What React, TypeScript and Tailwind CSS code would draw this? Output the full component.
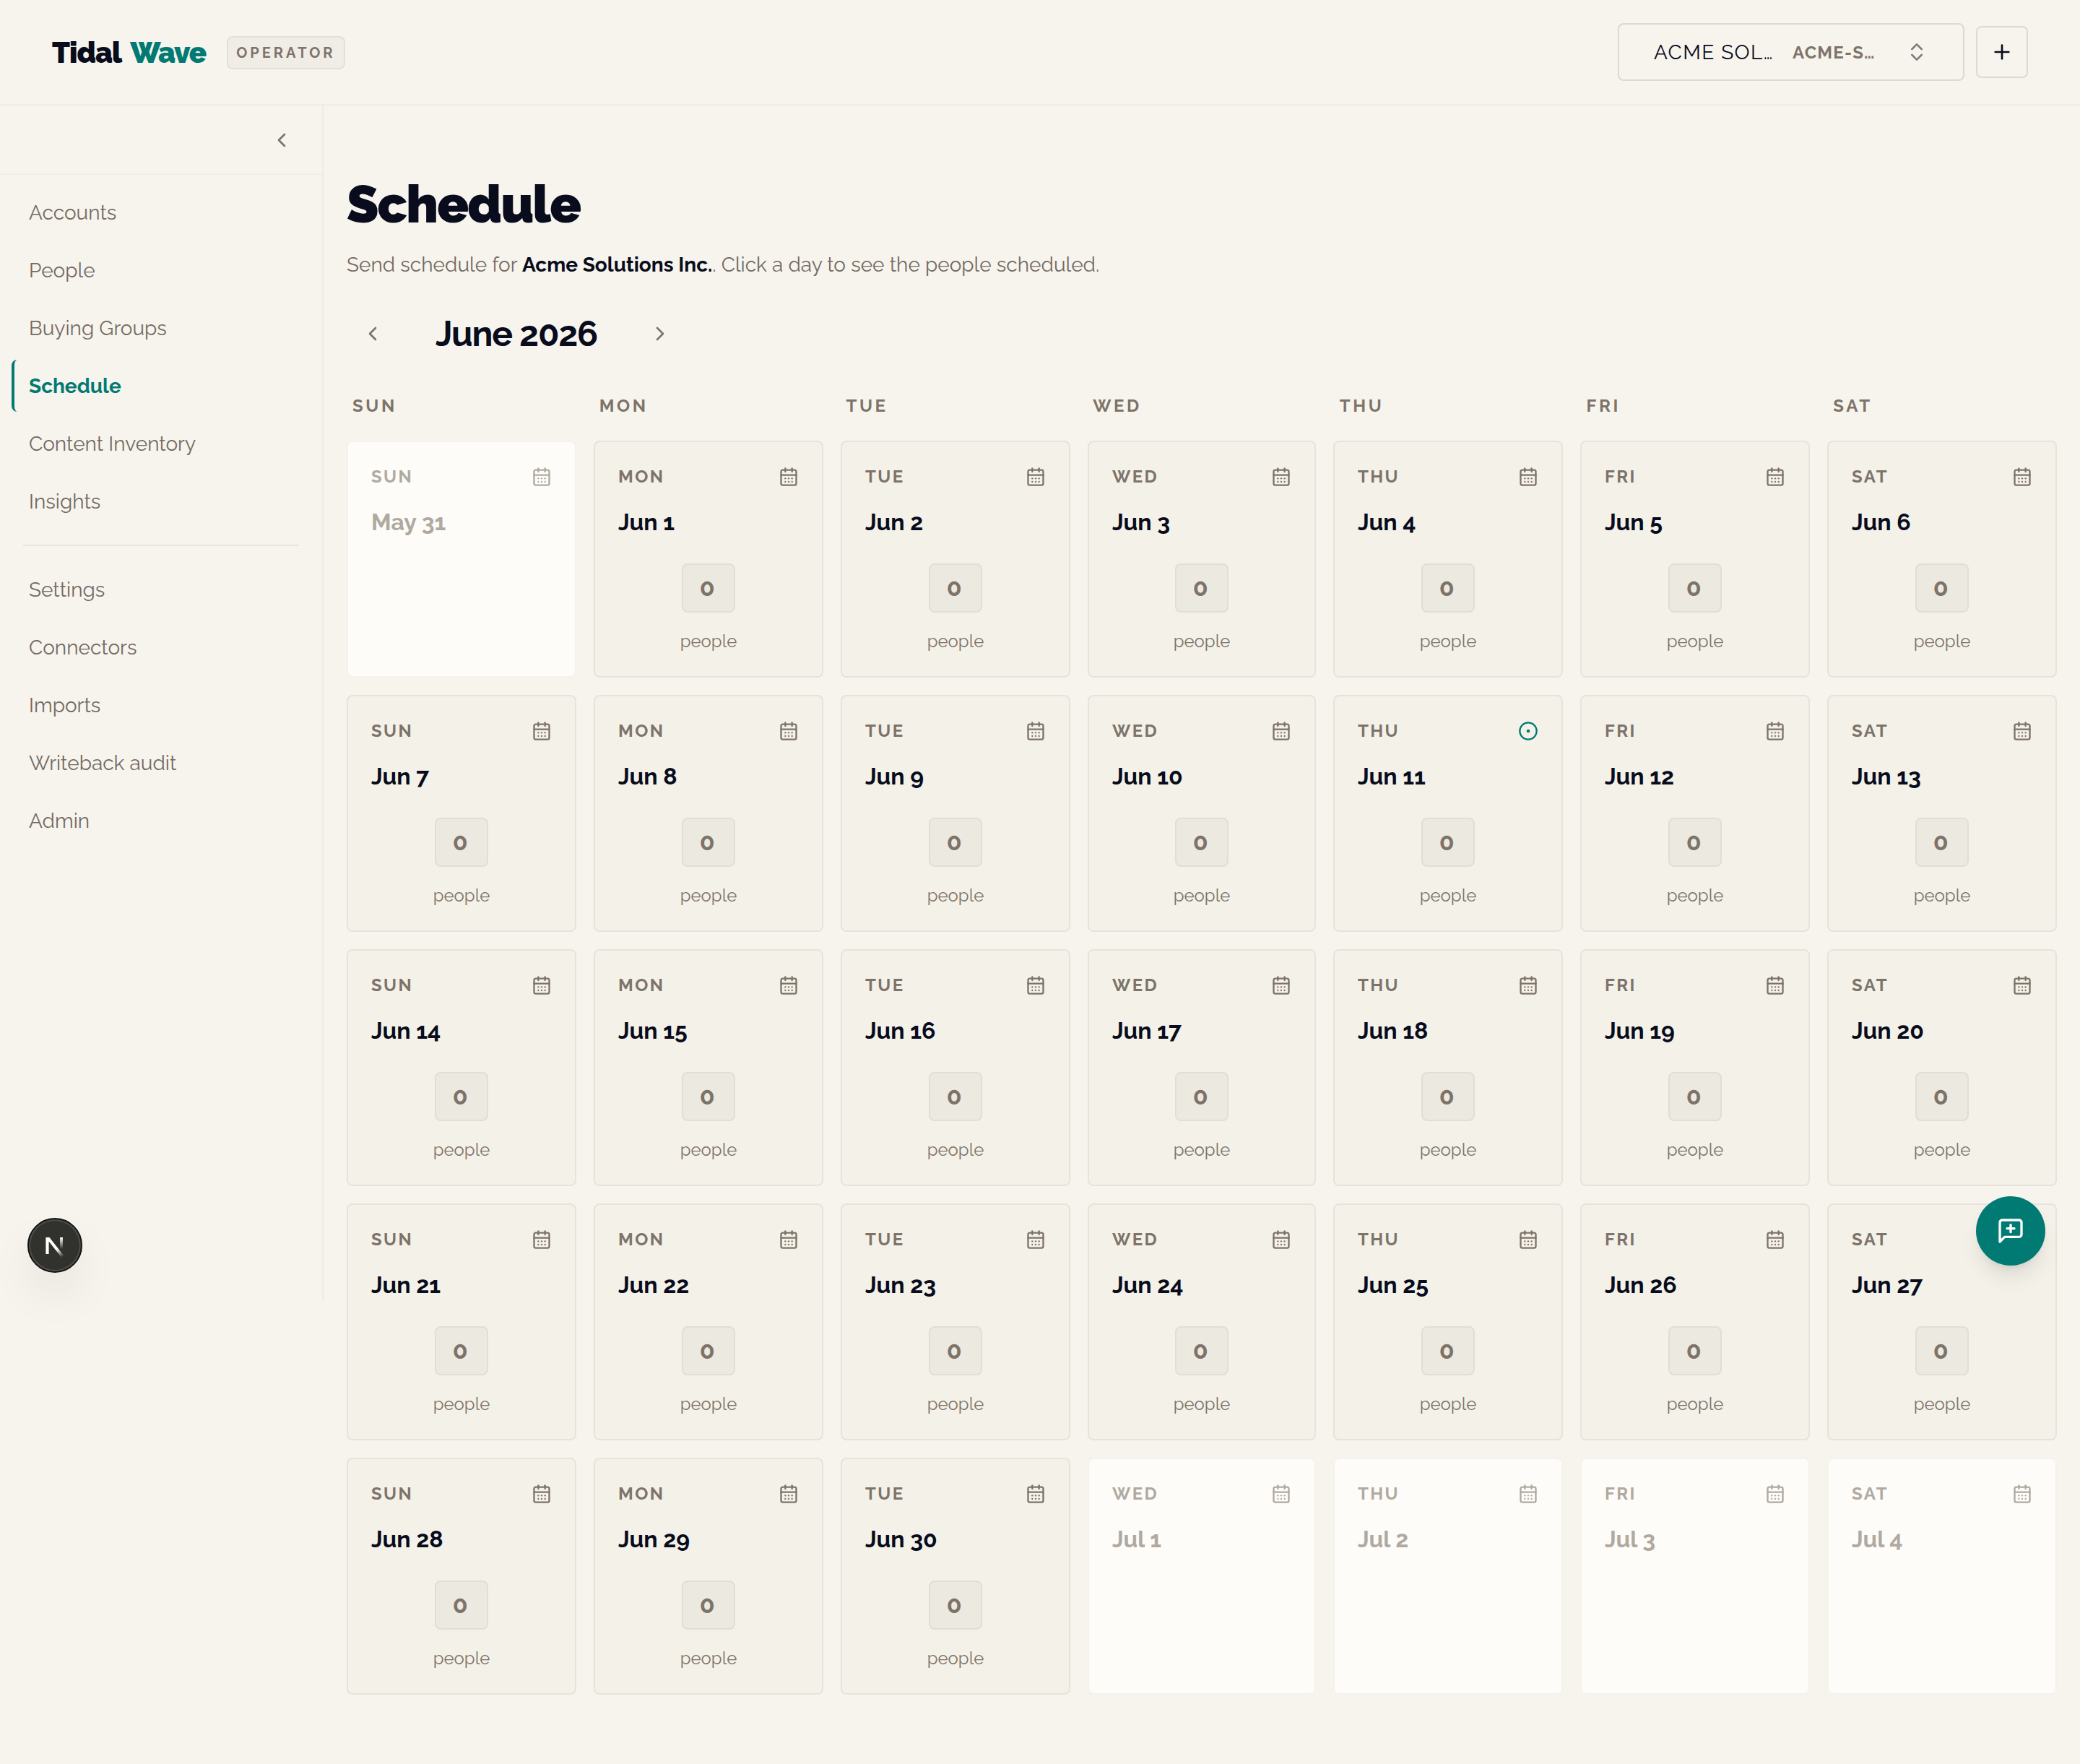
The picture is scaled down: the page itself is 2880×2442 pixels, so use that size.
import { CalendarDays, ChevronLeft, ChevronRight, ChevronsUpDown, CircleDot, Plus } from "lucide-react";
import clsx from "clsx";

const WEEKDAYS = ["Sun", "Mon", "Tue", "Wed", "Thu", "Fri", "Sat"];
const MONTHS = ["Jan", "Feb", "Mar", "Apr", "May", "Jun", "Jul", "Aug", "Sep", "Oct", "Nov", "Dec"];

const PRIMARY_NAV = ["Accounts", "People", "Buying Groups", "Schedule", "Content Inventory", "Insights"];
const SECONDARY_NAV = ["Settings", "Connectors", "Imports", "Writeback audit", "Admin"];

interface Day {
  weekday: string;
  label: string;
  inMonth: boolean;
  isToday: boolean;
  people: number;
}

function buildDays(): Day[] {
  return Array.from({ length: 35 }, (_, i) => {
    const date = new Date(2026, 4, 31 + i);
    const inMonth = date.getMonth() === 5;
    return {
      weekday: WEEKDAYS[date.getDay()],
      label: `${MONTHS[date.getMonth()]} ${date.getDate()}`,
      inMonth,
      isToday: inMonth && date.getDate() === 11,
      people: 0,
    };
  });
}

function NavItem({ label, active }: { label: string; active?: boolean }) {
  return (
    <a
      className={clsx(
        "flex h-[72px] items-center rounded-lg border-l-4 pt-px pl-5 text-[28px]",
        active ? "border-[#007a73] font-bold text-[#007a73]" : "border-transparent text-[#736a63]"
      )}
    >
      {label}
    </a>
  );
}

function Sidebar() {
  return (
    <aside className="h-[1656px] w-[448px] shrink-0 border-r-2 border-[#efece5]">
      <div className="flex h-24 items-center justify-end border-b-2 border-[#efece5] pt-0.5 pr-10">
        <ChevronLeft className="h-8 w-8 text-[#7d7369]" />
      </div>
      <nav className="flex flex-col gap-2 px-4 pt-4">
        {PRIMARY_NAV.map((label) => (
          <NavItem key={label} label={label} active={label === "Schedule"} />
        ))}
        <div className="mx-4 my-4 h-0.5 bg-[#e8e5dd]" />
        {SECONDARY_NAV.map((label) => (
          <NavItem key={label} label={label} />
        ))}
      </nav>
    </aside>
  );
}

function Header() {
  return (
    <header className="flex h-[146px] items-center justify-between border-b-2 border-[#efece5] px-[72px]">
      <div className="flex items-center gap-[29px] pt-0.5">
        <div className="flex gap-3 text-[40px] leading-[44px] font-black tracking-[-0.025em]">
          <span>Tidal</span>
          <span className="text-[#007a73]">Wave</span>
        </div>
        <span className="flex h-[46px] items-center rounded-lg border-2 border-[#e3e0d9] bg-[#f0ede6] px-[11px] text-xl font-bold tracking-[0.2em] text-[#7d7369]">
          OPERATOR
        </span>
      </div>
      <div className="flex items-center gap-4">
        <button className="flex h-20 w-[480px] items-center rounded-lg border-2 border-[#dcd9d1] pl-12">
          <span className="w-[168px] pt-0.5 text-left text-[28px] tracking-[0.05em]">ACME SOL…</span>
          <span className="ml-6 w-[118px] pt-0.5 text-left text-2xl font-bold tracking-[0.05em] text-[#7d7369]">ACME-S…</span>
          <ChevronsUpDown className="ml-auto mr-12 h-8 w-8 opacity-50" />
        </button>
        <button className="flex h-[72px] w-[72px] items-center justify-center rounded-lg border-2 border-[#dcd9d1]">
          <Plus className="h-8 w-8" />
        </button>
      </div>
    </header>
  );
}

function DayCard({ day }: { day: Day }) {
  return (
    <div
      className={clsx(
        "flex h-[328px] flex-col rounded-lg border-2 p-8",
        day.inMonth ? "border-[#e6e3dc] bg-[#f4f1e9]" : "border-[#f5f2ec] bg-[#fdfcf8]"
      )}
    >
      <div
        className={clsx(
          "flex h-8 items-center justify-between",
          day.inMonth ? "text-[#7d7369]" : "text-[#b0a9a0]"
        )}
      >
        <span className="text-2xl leading-8 font-bold tracking-[0.1em] uppercase">{day.weekday}</span>
        {day.isToday ? (
          <CircleDot className="h-7 w-7 text-[#007a73]" />
        ) : (
          <CalendarDays className="h-7 w-7" />
        )}
      </div>
      <div className={clsx("mt-[27px] text-[32px] leading-10 font-bold", !day.inMonth && "text-[#b0a9a0]")}>
        {day.label}
      </div>
      {day.inMonth && (
        <div className="mt-[37px] flex flex-col items-center text-[#7d7369]">
          <span className="flex h-[68px] w-[74px] items-center justify-center rounded-lg border-2 border-[#e1ded7] bg-[#ece9e1] pb-px text-[34px] font-bold tracking-[0.1em] tabular-nums">
            {day.people}
          </span>
          <span className="mt-6 text-2xl leading-8">people</span>
        </div>
      )}
    </div>
  );
}

function FeedbackButton() {
  return (
    <button className="absolute top-[1656px] right-12 flex h-24 w-24 items-center justify-center rounded-full bg-[#007a73] text-white shadow-[0_20px_30px_-6px_rgba(0,0,0,0.10),0_8px_12px_-8px_rgba(0,0,0,0.12)]">
      <svg
        className="h-10 w-10"
        viewBox="0 0 24 24"
        fill="none"
        stroke="currentColor"
        strokeWidth="2"
        strokeLinecap="round"
        strokeLinejoin="round"
      >
        <path d="M21 15a2 2 0 0 1-2 2H7l-4 4V5a2 2 0 0 1 2-2h14a2 2 0 0 1 2 2z" />
        <path d="M12 7v6" />
        <path d="M9 10h6" />
      </svg>
    </button>
  );
}

function DevToolsBadge() {
  return (
    <div className="absolute top-[1686px] left-[38px] flex h-[76px] w-[76px] items-center justify-center rounded-full border-2 border-[#141413] bg-[#31312e] shadow-[inset_0_0_0_2px_#4f4f4d,0_32px_64px_-8px_rgba(0,0,0,0.10)]">
      <svg className="h-10 w-10" viewBox="0 0 40 40" fill="none">
        <defs>
          <linearGradient id="stem" x1="0" y1="9" x2="0" y2="25" gradientUnits="userSpaceOnUse">
            <stop stopColor="#fff" />
            <stop offset="1" stopColor="#fff" stopOpacity="0" />
          </linearGradient>
          <linearGradient id="slash" x1="23" y1="25" x2="31" y2="36" gradientUnits="userSpaceOnUse">
            <stop stopColor="#fff" />
            <stop offset="1" stopColor="#fff" stopOpacity="0" />
          </linearGradient>
        </defs>
        <path d="M7.4 32V9H12.4L32.2 34L29 36.6L11.6 14.5V32Z" fill="url(#slash)" />
        <path d="M29 9v16" stroke="url(#stem)" strokeWidth="4" />
      </svg>
    </div>
  );
}

export default function App() {
  const days = buildDays();

  return (
    <div className="relative h-[2442px] w-[2880px] overflow-hidden bg-[#f7f4ed] font-[Raleway,Lato,sans-serif] text-[#080c1c]">
      <Header />
      <div className="flex">
        <Sidebar />
        <main className="min-w-0 flex-1 px-8 pt-[101px]">
          <h1 className="text-[72px] leading-[72px] font-black tracking-tight">Schedule</h1>
          <p className="mt-7 text-[28px] leading-10 text-[#736a63]">
            Send schedule for <span className="font-bold text-[#080c1c]">Acme Solutions Inc.</span>. Click a day to see
            the people scheduled.
          </p>

          {/* Month switcher */}
          <div className="mt-[39px] flex h-[72px] items-center">
            <button className="flex h-[72px] w-[72px] items-center justify-center text-[#7d7369]">
              <ChevronLeft className="h-8 w-8" />
            </button>
            <h2 className="w-[326px] text-center text-5xl font-bold tracking-tight">June 2026</h2>
            <button className="flex h-[72px] w-[72px] items-center justify-center text-[#7d7369]">
              <ChevronRight className="h-8 w-8" />
            </button>
          </div>

          <div className="mt-12 grid grid-cols-7 gap-6">
            {WEEKDAYS.map((d) => (
              <div key={d} className="px-2 text-2xl leading-8 font-bold tracking-[0.15em] text-[#7d7369] uppercase">
                {d}
              </div>
            ))}
          </div>
          <div className="mt-8 grid grid-cols-[318px_318px_318px_316px_318px_318px_318px] gap-6">
            {days.map((day) => (
              <DayCard key={day.label} day={day} />
            ))}
          </div>
        </main>
      </div>
      <DevToolsBadge />
      <FeedbackButton />
    </div>
  );
}
